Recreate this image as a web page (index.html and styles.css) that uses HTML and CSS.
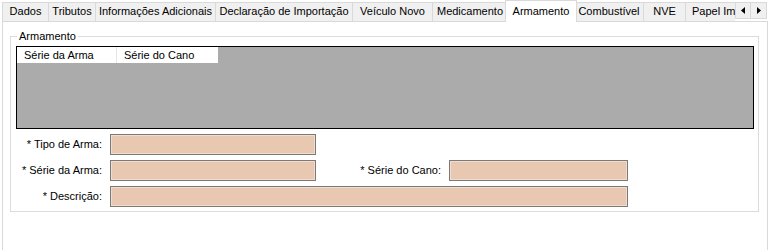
FILE: index.html
```html
<!DOCTYPE html>
<html>
<head>
<meta charset="utf-8">
<link rel="stylesheet" href="styles.css">
</head>
<body>
<div class="tabctl">
  <div class="tabs">
    <div class="tab w-dados">Dados</div>
    <div class="tab w-trib">Tributos</div>
    <div class="tab w-info">Informações Adicionais</div>
    <div class="tab w-decl">Declaração de Importação</div>
    <div class="tab w-veic">Veículo Novo</div>
    <div class="tab w-med">Medicamento</div>
    <div class="tab sel w-arm">Armamento</div>
    <div class="tab w-comb">Combustível</div>
    <div class="tab w-nve">NVE</div>
    <div class="tab w-papel">Papel Imune</div>
    <div class="scroll">
      <div class="sbtn"><svg width="5" height="7" viewBox="0 0 5 7"><path d="M4 0 L0 3.5 L4 7 Z" fill="#000"/></svg></div>
      <div class="sbtn"><svg width="5" height="7" viewBox="0 0 5 7"><path d="M1 0 L5 3.5 L1 7 Z" fill="#000"/></svg></div>
    </div>
  </div>
  <div class="page">
    <div class="group">
      <div class="gtitle">Armamento</div>
      <div class="list">
        <div class="lhead">
          <div class="col c1">Série da Arma</div>
          <div class="col c2">Série do Cano</div>
        </div>
      </div>
      <div class="form">
        <label class="lbl">* Tipo de Arma:</label>
        <div class="inp short"></div>
        <div></div><div></div>
        <label class="lbl">* Série da Arma:</label>
        <div class="inp short"></div>
        <label class="lbl">* Série do Cano:</label>
        <div class="inp cano"></div>
        <label class="lbl">* Descrição:</label>
        <div class="inp long"></div>
      </div>
    </div>
  </div>
</div>
</body>
</html>
```
FILE: styles.css
```css
html, body {
  margin: 0;
  padding: 0;
  background: #ffffff;
}
body {
  font-family: "Liberation Sans", Arial, sans-serif;
  font-size: 11px;
  color: #000;
  width: 773px;
  height: 250px;
  overflow: hidden;
}
.tabctl {
  padding-left: 2px;
  width: 766px;
}
.tabs {
  display: flex;
  align-items: flex-start;
  height: 21px;
  position: relative;
}
.tab {
  box-sizing: border-box;
  height: 19px;
  margin-top: 2px;
  background: #f0f0f0;
  border: 1px solid #d9d9d9;
  border-bottom: none;
  border-right: none;
  text-align: center;
  line-height: 17px;
  white-space: nowrap;
  overflow: hidden;
}
.tab.sel {
  background: #fff;
  height: 22px;
  margin-top: 0;
  margin-left: -2px;
  margin-right: -2px;
  border-right: 1px solid #d9d9d9;
  position: relative;
  z-index: 2;
  line-height: 20px;
}
.tab.sel + .tab { border-left: none; }
.w-dados { width: 46px; }
.w-trib { width: 47px; }
.w-info { width: 120px; }
.w-decl { width: 137px; }
.w-veic { width: 80px; }
.w-med { width: 75px; }
.w-arm { width: 72px; }
.w-comb { width: 68px; }
.w-nve { width: 42px; }
.w-papel { width: 50px; text-align: left; padding-left: 6px; }
.scroll {
  display: flex;
  margin-top: 2px;
  height: 17px;
}
.sbtn {
  box-sizing: border-box;
  width: 16px;
  height: 17px;
  background: #f0f0f0;
  border: 1px solid #d9d9d9;
  display: flex;
  align-items: center;
  justify-content: center;
}
.sbtn + .sbtn { border-left: none; }
.page {
  box-sizing: border-box;
  width: 766px;
  height: 229px;
  border: 1px solid #d9d9d9;
  border-bottom: none;
  background: #fff;
  padding: 14px 8px 0 7px;
}
.group {
  position: relative;
  box-sizing: border-box;
  height: 176px;
  border: 1px solid #dcdcdc;
  padding: 9px 4px 0 5px;
}
.gtitle {
  position: absolute;
  left: 6px;
  top: -8px;
  background: #fff;
  padding: 0 2px;
  line-height: 14px;
}
.list {
  box-sizing: border-box;
  height: 83px;
  border: 1px solid #000;
  background: #ababab;
}
.lhead {
  display: flex;
  height: 16px;
  width: 201px;
  background: #fff;
}
.col {
  box-sizing: border-box;
  line-height: 16px;
  padding-left: 7px;
}
.c1 { width: 100px; border-right: 1px solid #e5e5e5; }
.c2 { width: 101px; }
.form {
  display: grid;
  grid-template-columns: 86px 206px 117px 179px;
  grid-auto-rows: 21px;
  row-gap: 5px;
  column-gap: 8px;
  margin-top: 5px;
}
.lbl {
  text-align: right;
  line-height: 21px;
  white-space: nowrap;
}
.inp {
  box-sizing: border-box;
  border: 1px solid #7a7a7a;
  background: #e8c8b0;
  box-shadow: inset 0 0 0 1px #f2dccb;
}
.inp.long { grid-column: 2 / 5; }
```
